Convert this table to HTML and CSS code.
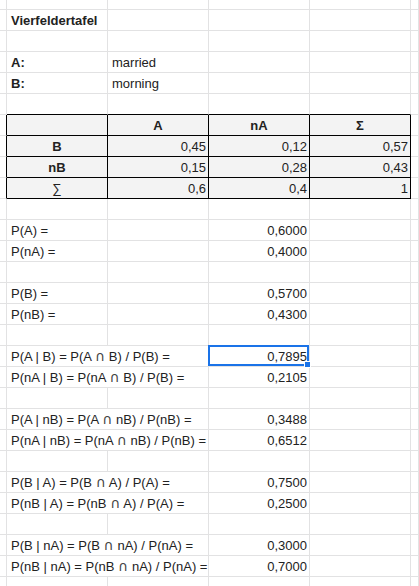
FILE: index.html
```html
<!DOCTYPE html>
<html>
<head>
<meta charset="utf-8">
<link rel="stylesheet" href="styles.css">
</head>
<body>
<div class="sheet">
  <div class="row partial"><div class="c"></div><div class="c"></div><div class="c"></div><div class="c"></div><div class="c"></div><div class="c"></div></div>
  <div class="row"><div class="c"></div><div class="c b">Vierfeldertafel</div><div class="c"></div><div class="c"></div><div class="c"></div><div class="c"></div></div>
  <div class="row"><div class="c"></div><div class="c"></div><div class="c"></div><div class="c"></div><div class="c"></div><div class="c"></div></div>
  <div class="row"><div class="c"></div><div class="c b">A:</div><div class="c">married</div><div class="c"></div><div class="c"></div><div class="c"></div></div>
  <div class="row"><div class="c"></div><div class="c b">B:</div><div class="c">morning</div><div class="c"></div><div class="c"></div><div class="c"></div></div>
  <div class="row"><div class="c"></div><div class="c tt"></div><div class="c tt"></div><div class="c tt"></div><div class="c tt"></div><div class="c"></div></div>

  <div class="row"><div class="c tl"></div><div class="c t"></div><div class="c t ctr b">A</div><div class="c t ctr b">nA</div><div class="c t ctr b">Σ</div><div class="c"></div></div>
  <div class="row"><div class="c tl"></div><div class="c t ctr b">B</div><div class="c t num">0,45</div><div class="c t num">0,12</div><div class="c t num">0,57</div><div class="c"></div></div>
  <div class="row"><div class="c tl"></div><div class="c t ctr b">nB</div><div class="c t num">0,15</div><div class="c t num">0,28</div><div class="c t num">0,43</div><div class="c"></div></div>
  <div class="row"><div class="c tl"></div><div class="c t ctr">∑</div><div class="c t num">0,6</div><div class="c t num">0,4</div><div class="c t num">1</div><div class="c"></div></div>

  <div class="row"><div class="c"></div><div class="c"></div><div class="c"></div><div class="c"></div><div class="c"></div><div class="c"></div></div>
  <div class="row"><div class="c"></div><div class="c">P(A) =</div><div class="c"></div><div class="c num">0,6000</div><div class="c"></div><div class="c"></div></div>
  <div class="row"><div class="c"></div><div class="c">P(nA) =</div><div class="c"></div><div class="c num">0,4000</div><div class="c"></div><div class="c"></div></div>
  <div class="row"><div class="c"></div><div class="c"></div><div class="c"></div><div class="c"></div><div class="c"></div><div class="c"></div></div>
  <div class="row"><div class="c"></div><div class="c">P(B) =</div><div class="c"></div><div class="c num">0,5700</div><div class="c"></div><div class="c"></div></div>
  <div class="row"><div class="c"></div><div class="c">P(nB) =</div><div class="c"></div><div class="c num">0,4300</div><div class="c"></div><div class="c"></div></div>
  <div class="row"><div class="c"></div><div class="c"></div><div class="c"></div><div class="c"></div><div class="c"></div><div class="c"></div></div>
  <div class="row"><div class="c"></div><div class="c span2">P(A | B) = P(A <span class="cap">∩</span> B) / P(B) =</div><div class="c num sel">0,7895</div><div class="c"></div><div class="c"></div></div>
  <div class="row"><div class="c"></div><div class="c span2">P(nA | B) = P(nA <span class="cap">∩</span> B) / P(B) =</div><div class="c num">0,2105</div><div class="c"></div><div class="c"></div></div>
  <div class="row"><div class="c"></div><div class="c"></div><div class="c"></div><div class="c"></div><div class="c"></div><div class="c"></div></div>
  <div class="row"><div class="c"></div><div class="c span2">P(A | nB) = P(A <span class="cap">∩</span> nB) / P(nB) =</div><div class="c num">0,3488</div><div class="c"></div><div class="c"></div></div>
  <div class="row"><div class="c"></div><div class="c span2">P(nA | nB) = P(nA <span class="cap">∩</span> nB) / P(nB) =</div><div class="c num">0,6512</div><div class="c"></div><div class="c"></div></div>
  <div class="row"><div class="c"></div><div class="c"></div><div class="c"></div><div class="c"></div><div class="c"></div><div class="c"></div></div>
  <div class="row"><div class="c"></div><div class="c span2">P(B | A) = P(B <span class="cap">∩</span> A) / P(A) =</div><div class="c num">0,7500</div><div class="c"></div><div class="c"></div></div>
  <div class="row"><div class="c"></div><div class="c span2">P(nB | A) = P(nB <span class="cap">∩</span> A) / P(A) =</div><div class="c num">0,2500</div><div class="c"></div><div class="c"></div></div>
  <div class="row"><div class="c"></div><div class="c"></div><div class="c"></div><div class="c"></div><div class="c"></div><div class="c"></div></div>
  <div class="row"><div class="c"></div><div class="c span2">P(B | nA) = P(B <span class="cap">∩</span> nA) / P(nA) =</div><div class="c num">0,3000</div><div class="c"></div><div class="c"></div></div>
  <div class="row"><div class="c"></div><div class="c span2">P(nB | nA) = P(nB <span class="cap">∩</span> nA) / P(nA) =</div><div class="c num">0,7000</div><div class="c"></div><div class="c"></div></div>
  <div class="row"><div class="c"></div><div class="c"></div><div class="c"></div><div class="c"></div><div class="c"></div><div class="c"></div></div>
</div>
</body>
</html>
```

FILE: styles.css
```css
html, body {
  margin: 0;
  padding: 0;
  background: #ffffff;
}

.sheet {
  width: 419px;
  height: 586px;
  overflow: hidden;
  font-family: "Liberation Sans", Arial, sans-serif;
  font-size: 13px;
  color: #222222;
}

.row {
  display: grid;
  grid-template-columns: 7px 101px 101px 101px 101px 1fr;
  height: 21px;
}

.row.partial {
  height: 10px;
}

.c {
  box-sizing: border-box;
  border-right: 1px solid #e2e2e3;
  border-bottom: 1px solid #e2e2e3;
  padding: 1px 2px 0 4px;
  line-height: 19px;
  white-space: nowrap;
  overflow: hidden;
}

.b {
  font-weight: bold;
}

.ctr {
  text-align: center;
  padding-left: 2px;
}

.num {
  text-align: right;
}

.span2 {
  grid-column: span 2;
}

.cap {
  font-family: "DejaVu Sans", sans-serif;
  font-size: 14px;
  line-height: 10px;
  color: #444444;
}

.tt {
  border-bottom-color: #000000;
}

.tl {
  border-right-color: #000000;
}

.t {
  background: #f3f3f3;
  border-right-color: #000000;
  border-bottom-color: #000000;
}

.sel {
  position: relative;
  overflow: visible;
}

.sel::before {
  content: "";
  position: absolute;
  left: -1px;
  top: -1px;
  right: 0;
  bottom: 0;
  border: 2px solid #1a73e8;
}

.sel::after {
  content: "";
  position: absolute;
  right: -2px;
  bottom: -2px;
  width: 7px;
  height: 7px;
  background: #1a73e8;
  box-sizing: border-box;
  border: 1px solid #ffffff;
}
```
